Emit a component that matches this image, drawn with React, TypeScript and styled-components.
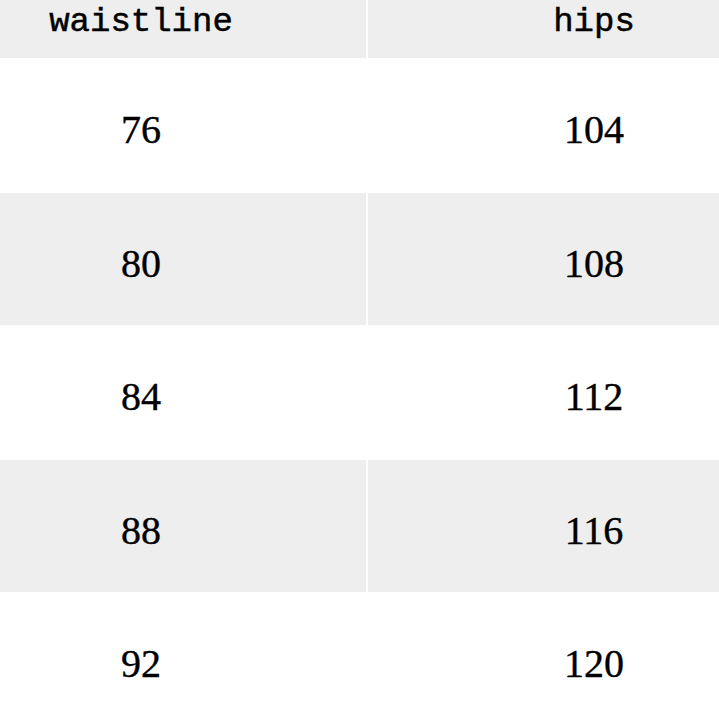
import React from "react";
import styled, { createGlobalStyle } from "styled-components";

const Global = createGlobalStyle`
  html, body { margin: 0; padding: 0; background: #ffffff; }
`;

const Viewport = styled.div`
  width: 719px;
  height: 719px;
  overflow: hidden;
`;

const Table = styled.div`
  margin-left: -84px;
  margin-top: -22px;
  width: 904px;
  display: grid;
  grid-template-columns: 450px 2px 452px;
`;

const Cell = styled.div<{ $gray: boolean; $h: number; $head?: boolean }>`
  height: ${(p) => p.$h}px;
  background: ${(p) => (p.$gray ? "#edeeed" : "#ffffff")};
  display: flex;
  align-items: center;
  justify-content: center;
  color: #000;
  font-family: ${(p) =>
    p.$head ? '"Liberation Mono", monospace' : '"Liberation Serif", serif'};
  font-size: ${(p) => (p.$head ? "34px" : "40px")};
  -webkit-text-stroke: ${(p) => (p.$head ? "0.5px #000" : "0.4px #000")};
  padding-top: ${(p) => (p.$head ? "7px" : "8px")};
  box-sizing: border-box;
`;

const Divider = styled.div<{ $h: number }>`
  height: ${(p) => p.$h}px;
  background: #ffffff;
`;

const rows = [
  ["76", "104"],
  ["80", "108"],
  ["84", "112"],
  ["88", "116"],
  ["92", "120"],
];

const heights = [135, 132, 135, 132, 135];

export default function App() {
  return (
    <>
      <Global />
      <Viewport>
        <Table>
          <Cell $gray $h={80} $head>waistline</Cell>
          <Divider $h={80} />
          <Cell $gray $h={80} $head>hips</Cell>
          {rows.map((r, i) => {
            const gray = i % 2 === 1;
            const h = heights[i];
            return (
              <React.Fragment key={i}>
                <Cell $gray={gray} $h={h}>{r[0]}</Cell>
                <Divider $h={h} />
                <Cell $gray={gray} $h={h}>{r[1]}</Cell>
              </React.Fragment>
            );
          })}
        </Table>
      </Viewport>
    </>
  );
}
